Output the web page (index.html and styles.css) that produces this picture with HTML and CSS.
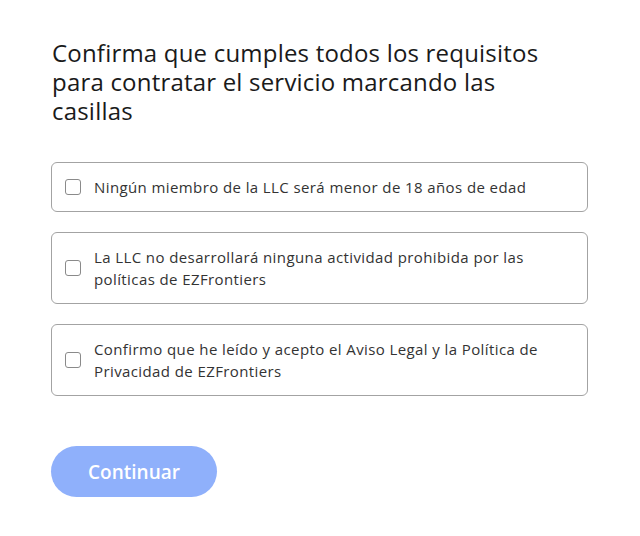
FILE: index.html
```html
<!DOCTYPE html>
<html lang="es">
<head>
<meta charset="utf-8">
<link rel="stylesheet" href="styles.css">
</head>
<body>
<main class="page">
  <h1 class="title">Confirma que cumples todos los requisitos<br>para contratar el servicio marcando las<br>casillas</h1>
  <div class="options">
    <label class="option"><span class="box"></span><span class="text">Ningún miembro de la LLC será menor de 18 años de edad</span></label>
    <label class="option"><span class="box"></span><span class="text">La LLC no desarrollará ninguna actividad prohibida por las<br>políticas de EZFrontiers</span></label>
    <label class="option"><span class="box"></span><span class="text">Confirmo que he leído y acepto el Aviso Legal y la Política de<br>Privacidad de EZFrontiers</span></label>
  </div>
  <button class="btn" type="button">Continuar</button>
</main>
</body>
</html>
```
FILE: styles.css
```css
html, body { margin: 0; padding: 0; background: #fff; }
body { font-family: "Open Sans", "Noto Sans", sans-serif; color: #1c1c1c; }
.page { width: 537px; padding: 38px 0 0 51px; display: flex; flex-direction: column; }
.title { margin: 0; font-size: 24px; line-height: 29px; font-weight: 500; color: #1a1a1a; padding-left: 1px; white-space: nowrap; letter-spacing: 0.2px; }
.options { margin-top: 37px; display: flex; flex-direction: column; gap: 20px; }
.option { display: flex; align-items: center; gap: 13px; border: 1px solid #a3a3a3; border-radius: 6px; padding: 13px 13px; }
.box { flex: none; width: 14px; height: 14px; border: 1px solid #8a8a8a; border-radius: 3px; background: #fff; }
.text { font-size: 15px; line-height: 22px; color: #333; white-space: nowrap; letter-spacing: 0.4px; }
.btn { align-self: flex-start; margin-top: 50px; width: 166px; height: 51px; border: none; border-radius: 26px; background: #8fb0fb; color: #fff; font-family: inherit; font-size: 19px; font-weight: 600; }
```
